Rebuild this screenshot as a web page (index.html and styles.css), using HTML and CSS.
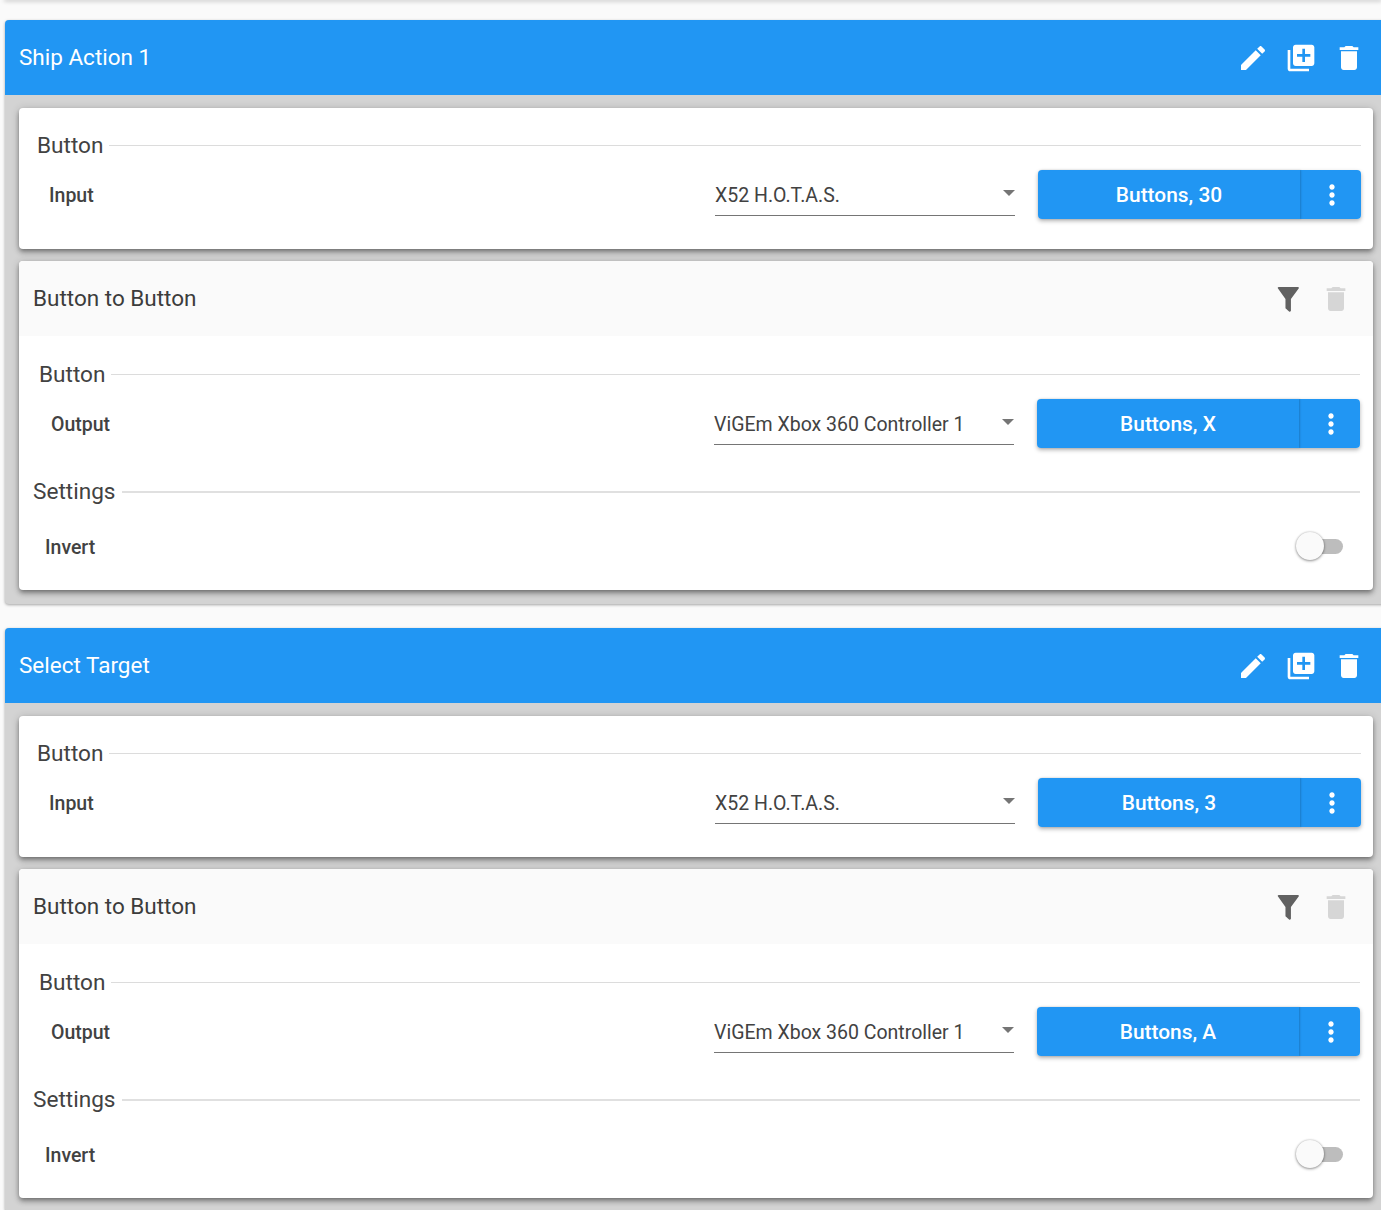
FILE: index.html
```html
<!DOCTYPE html>
<html lang="en">
<head>
<meta charset="utf-8">
<title>Actions</title>
<link rel="stylesheet" href="styles.css">
</head>
<body>
<svg class="defs" width="0" height="0" aria-hidden="true">
  <symbol id="i-edit" viewBox="0 0 24 24"><path d="M3 17.25V21h3.75L17.81 9.94l-3.75-3.75L3 17.25zM20.71 7.04c.39-.39.39-1.02 0-1.41l-2.34-2.34c-.39-.39-1.02-.39-1.41 0l-1.83 1.83 3.75 3.75 1.83-1.83z"/></symbol>
  <symbol id="i-add" viewBox="0 0 24 24"><path d="M4 6H2v14c0 1.1.9 2 2 2h14v-2H4V6zm16-4H8c-1.1 0-2 .9-2 2v12c0 1.1.9 2 2 2h12c1.1 0 2-.9 2-2V4c0-1.1-.9-2-2-2zm-1 9h-4v4h-2v-4H9V9h4V5h2v4h4v2z"/></symbol>
  <symbol id="i-del" viewBox="0 0 24 24"><path d="M6 19c0 1.1.9 2 2 2h8c1.1 0 2-.9 2-2V7H6v12zM19 4h-3.5l-1-1h-5l-1 1H5v2h14V4z"/></symbol>
  <symbol id="i-more" viewBox="0 0 24 24"><path d="M12 8c1.1 0 2-.9 2-2s-.9-2-2-2-2 .9-2 2 .9 2 2 2zm0 2c-1.1 0-2 .9-2 2s.9 2 2 2 2-.9 2-2-.9-2-2-2zm0 6c-1.1 0-2 .9-2 2s.9 2 2 2 2-.9 2-2-.9-2-2-2z"/></symbol>
  <symbol id="i-filter" viewBox="0 0 24 24"><path d="M5 3h14.500c.6 0 .9.7.5 1.200L14.200 12v8.700c0 .7-.8 1.100-1.400.6L10.100 19V12L4.500 4.200C4.100 3.700 4.400 3 5 3z"/></symbol>
</svg>
<div class="top-edge"></div>

<section class="action">
  <header class="action-head">
    <h2 class="action-title">Ship Action 1</h2>
    <div class="icons">
      <span class="icon-btn"><svg class="icon"><use href="#i-edit"/></svg></span>
      <span class="icon-btn"><svg class="icon"><use href="#i-add"/></svg></span>
      <span class="icon-btn"><svg class="icon"><use href="#i-del"/></svg></span>
    </div>
  </header>
  <div class="action-body">
    <div class="card input-card">
      <div class="section-head button-head"><span>Button</span><i class="rule"></i></div>
      <div class="row">
        <span class="label">Input</span>
        <div class="select"><span>X52 H.O.T.A.S.</span><i class="caret"></i></div>
        <div class="split"><button class="split-main">Buttons, 30</button><button class="split-more"><svg class="icon"><use href="#i-more"/></svg></button></div>
      </div>
    </div>
    <div class="card output-card">
      <div class="card-head">
        <h3 class="card-title">Button to Button</h3>
        <div class="icons tight">
          <span class="icon-btn dark"><svg class="icon"><use href="#i-filter"/></svg></span>
          <span class="icon-btn muted"><svg class="icon"><use href="#i-del"/></svg></span>
        </div>
      </div>
      <div class="card-content">
        <div class="section-head button-head"><span>Button</span><i class="rule"></i></div>
        <div class="row">
          <span class="label">Output</span>
          <div class="select"><span>ViGEm Xbox 360 Controller 1</span><i class="caret"></i></div>
          <div class="split"><button class="split-main">Buttons, X</button><button class="split-more"><svg class="icon"><use href="#i-more"/></svg></button></div>
        </div>
        <div class="section-head settings-head"><span>Settings</span><i class="rule thick"></i></div>
        <div class="row switch-row">
          <span class="label">Invert</span>
          <div class="switch"><i class="track"></i><i class="thumb"></i></div>
        </div>
      </div>
    </div>
  </div>
</section>

<section class="action">
  <header class="action-head">
    <h2 class="action-title">Select Target</h2>
    <div class="icons">
      <span class="icon-btn"><svg class="icon"><use href="#i-edit"/></svg></span>
      <span class="icon-btn"><svg class="icon"><use href="#i-add"/></svg></span>
      <span class="icon-btn"><svg class="icon"><use href="#i-del"/></svg></span>
    </div>
  </header>
  <div class="action-body">
    <div class="card input-card">
      <div class="section-head button-head"><span>Button</span><i class="rule"></i></div>
      <div class="row">
        <span class="label">Input</span>
        <div class="select"><span>X52 H.O.T.A.S.</span><i class="caret"></i></div>
        <div class="split"><button class="split-main">Buttons, 3</button><button class="split-more"><svg class="icon"><use href="#i-more"/></svg></button></div>
      </div>
    </div>
    <div class="card output-card">
      <div class="card-head">
        <h3 class="card-title">Button to Button</h3>
        <div class="icons tight">
          <span class="icon-btn dark"><svg class="icon"><use href="#i-filter"/></svg></span>
          <span class="icon-btn muted"><svg class="icon"><use href="#i-del"/></svg></span>
        </div>
      </div>
      <div class="card-content">
        <div class="section-head button-head"><span>Button</span><i class="rule"></i></div>
        <div class="row">
          <span class="label">Output</span>
          <div class="select"><span>ViGEm Xbox 360 Controller 1</span><i class="caret"></i></div>
          <div class="split"><button class="split-main">Buttons, A</button><button class="split-more"><svg class="icon"><use href="#i-more"/></svg></button></div>
        </div>
        <div class="section-head settings-head"><span>Settings</span><i class="rule thick"></i></div>
        <div class="row switch-row">
          <span class="label">Invert</span>
          <div class="switch"><i class="track"></i><i class="thumb"></i></div>
        </div>
      </div>
    </div>
  </div>
</section>
</body>
</html>
```

FILE: styles.css
```css
* { box-sizing: border-box; }
html, body { margin: 0; height: 1210px; overflow: hidden; }
body {
  background: #fafafa;
  font-family: Roboto, "Liberation Sans", sans-serif;
  color: #424242;
}
.defs { position: absolute; }
.top-edge {
  height: 0;
  margin-left: 5px;
  box-shadow: 0 0 4px 1px rgba(0,0,0,.3);
}
.action {
  width: 1382px;
  margin: 20px 0 24px 5px;
  border-radius: 4px;
  background: #d3d3d3;
  box-shadow: 0 1px 3px rgba(0,0,0,.35);
}
.action-head {
  height: 75px;
  padding: 0 14px;
  display: flex;
  align-items: center;
  justify-content: space-between;
  background: #2196f3;
  color: #fff;
  border-radius: 4px 4px 0 0;
}
.action-title, .card-title { margin: 0; padding-bottom: 2px; font-weight: 400; font-size: 22.5px; line-height: 30px; }
.icons { display: flex; }
.icon-btn { width: 48px; height: 48px; display: flex; align-items: center; justify-content: center; }
.icon { width: 32px; height: 32px; fill: currentColor; display: block; }
.dark { color: #616161; }
.muted { color: #d6d6d6; }
.tight { margin-right: -1px; }

.action-body {
  padding: 13px 14px 14px;
  display: flex;
  flex-direction: column;
  gap: 12px;
}
.card {
  background: #fff;
  border-radius: 4px;
  box-shadow: 0 2px 4px -1px rgba(0,0,0,.3), 0 4px 5px rgba(0,0,0,.2), 0 1px 8px rgba(0,0,0,.18);
}
.input-card { height: 141px; padding: 22px 12px 0 18px; }
.card-head {
  height: 75px;
  padding: 0 14px;
  display: flex;
  align-items: center;
  justify-content: space-between;
  background: #fafafa;
  border-radius: 4px 4px 0 0;
}
.card-title { color: #3c3c3c; }
.card-content { padding: 23px 13px 19px 14px; }
.output-card .button-head { margin-left: 6px; }

.section-head {
  height: 30px;
  display: flex;
  align-items: center;
  gap: 6px;
  font-size: 22.6px;
  line-height: 30px;
  color: #424242;
}
.section-head span { padding-top: 2px; }
.rule { flex: 1; height: 1px; background: #dcdcdc; }
.rule.thick { height: 2px; margin-top: 2px; background: #e0e0e0; }
.settings-head { margin-top: 28px; }

.row { display: flex; align-items: flex-start; height: 49px; margin-top: 10px; padding-left: 12px; }
.output-card .row { padding-left: 18px; }
.label { flex: 1; font-size: 19.5px; font-weight: 500; line-height: 51px; color: #424242; }
.select {
  width: 300px;
  height: 46px;
  padding-top: 5px;
  margin-right: 23px;
  display: flex;
  align-items: center;
  justify-content: space-between;
  font-size: 19.5px;
  border-bottom: 1px solid #757575;
}
.caret {
  width: 0; height: 0;
  margin-bottom: 4px;
  border-left: 6px solid transparent;
  border-right: 6px solid transparent;
  border-top: 6px solid #757575;
}
.split { width: 323px; height: 49px; display: flex; border-radius: 4px; box-shadow: 0 2px 4px rgba(0,0,0,.3); }
.split button {
  border: 0;
  padding: 0;
  color: #fff;
  background: #2196f3;
  font: 500 20.9px Roboto, "Liberation Sans", sans-serif;
  display: flex;
  align-items: center;
  justify-content: center;
}
.split-main { flex: 1; border-radius: 4px 0 0 4px; box-shadow: 1px 0 2px rgba(0,0,0,.18); position: relative; }
.split button.split-more { width: 61px; padding-left: 2px; border-radius: 0 4px 4px 0; }

.output-card .switch-row { height: 48px; margin-top: 17px; padding-left: 12px; }
.switch-row .label { line-height: 49px; }
.switch { position: relative; width: 48px; height: 48px; margin-right: 17px; }
.track { position: absolute; left: 15px; top: 16px; width: 33px; height: 15px; border-radius: 8px; background: #bdbdbd; }
.thumb {
  position: absolute; left: 1px; top: 9px; width: 28px; height: 28px;
  border-radius: 50%; background: #fafafa;
  box-shadow: 0 1px 3px rgba(0,0,0,.4), 0 0 2px rgba(0,0,0,.2);
}
```
